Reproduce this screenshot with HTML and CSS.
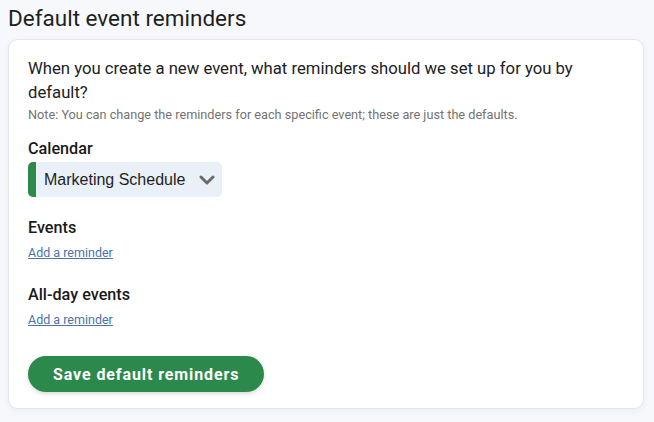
FILE: index.html
```html
<!DOCTYPE html>
<html lang="en">
  <head>
    <meta charset="UTF-8" />
    <meta name="viewport" content="width=device-width, initial-scale=1.0" />
    <title>Default event reminders</title>
    <link rel="stylesheet" href="styles.css">
  </head>
  <body>
    <h1>Default event reminders</h1>
    <div class="card">
      <p class="intro">When you create a new event, what reminders should we set up for you by default?</p>
      <p class="note">Note: You can change the reminders for each specific event; these are just the defaults.</p>

      <!-- Calendar picker -->
      <div class="field calendar-field">
        <label class="field-label" for="calendar">Calendar</label>
        <div class="select-wrap">
          <span class="swatch"></span>
          <select id="calendar">
            <option>Marketing Schedule</option>
          </select>
          <svg class="chevron" width="16" height="10" viewBox="0 0 16 10">
            <path d="M2 2 L8 8 L14 2" fill="none" stroke="#6b6b6b" stroke-width="3" stroke-linecap="round" stroke-linejoin="round" />
          </svg>
        </div>
      </div>

      <div class="field">
        <div class="field-label">Events</div>
        <a href="#" class="add-link">Add a reminder</a>
      </div>

      <div class="field allday-field">
        <div class="field-label">All-day events</div>
        <a href="#" class="add-link">Add a reminder</a>
      </div>

      <button class="save-btn">Save default reminders</button>
    </div>
  </body>
</html>
```

FILE: styles.css
```css
body {
  margin: 0;
  padding: 6px 8px;
  background-color: #f6f8fb;
  color: #1f1f1f;
  font-family: Roboto, "Noto Sans", sans-serif;
}
h1 {
  margin: 0 0 8px;
  font-size: 22.5px;
  font-weight: 400;
  line-height: 25px;
  color: #1f1f1f;
}
.card {
  background-color: #fff;
  border: 1px solid #e4e8ee;
  border-radius: 10px;
  box-shadow: 0 2px 6px rgba(30, 50, 80, 0.06);
  padding: 17px 19px 16px;
  width: 596px;
}
.intro {
  margin: 0;
  font-size: 16.7px;
  line-height: 24px;
  color: #202124;
}
.note {
  margin: 2px 0 0;
  font-size: 12.7px;
  line-height: 16px;
  color: #737373;
}
.field {
  margin-top: 20px;
}
.calendar-field {
  margin-top: 15px;
}
.allday-field {
  margin-top: 23px;
}
.field-label {
  display: block;
  font-size: 16.2px;
  font-weight: 500;
  line-height: 22px;
  color: #1a1a1a;
}
.select-wrap {
  position: relative;
  display: flex;
  align-items: center;
  width: fit-content;
  margin-top: 2px;
  height: 35px;
  background-color: #e9f0f8;
  border-radius: 5px;
  overflow: hidden;
}
.swatch {
  width: 8px;
  align-self: stretch;
  background-color: #2b8a4b;
}
.select-wrap select {
  appearance: none;
  border: none;
  background: transparent;
  font-family: "Liberation Sans", Arial, sans-serif;
  font-size: 16px;
  color: #1f1f1f;
  padding: 0 36px 0 8px;
  height: 35px;
  outline: none;
}
.chevron {
  position: absolute;
  right: 7px;
  top: 13px;
  pointer-events: none;
}
.add-link {
  display: inline-block;
  margin-top: 6px;
  font-size: 12.5px;
  line-height: 16px;
  color: #4a74a8;
}
.save-btn {
  display: block;
  margin-top: 28px;
  cursor: pointer;
  background-color: #2b8a4b;
  color: #fff;
  border: none;
  border-radius: 18px;
  height: 36px;
  padding: 0 25px;
  font-family: Roboto, sans-serif;
  font-size: 16px;
  font-weight: 700;
  letter-spacing: 0.9px;
  box-shadow: 0 2px 4px rgba(0, 0, 0, 0.15);
}
```
